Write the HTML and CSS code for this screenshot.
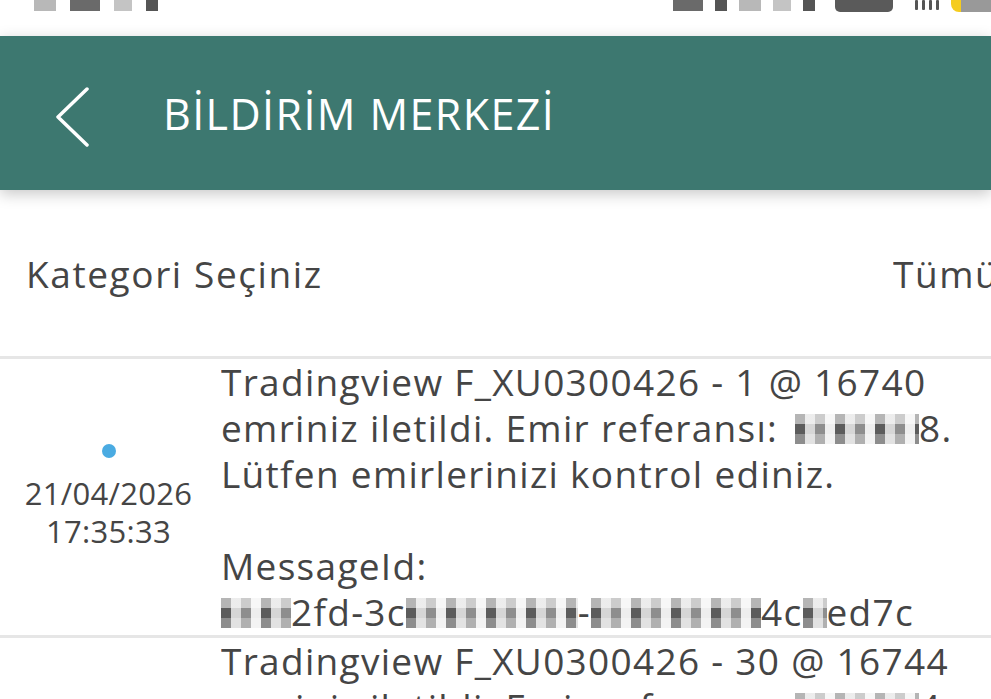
FILE: index.html
```html
<!DOCTYPE html>
<html>
<head>
<meta charset="utf-8">
<title>Bildirim Merkezi</title>
<link rel="stylesheet" href="styles.css">
</head>
<body>

<div class="status-bar">
    <div class="status-left">
        <span class="px px-a"></span>
        <span class="px px-b"></span>
        <span class="px px-c"></span>
        <span class="px px-d"></span>
    </div>
    <div class="status-right">
        <span class="px px-b"></span>
        <span class="px px-d"></span>
        <span class="px px-a"></span>
        <span class="px px-c"></span>
        <span class="px px-d"></span>
        <span class="battery"></span>
        <span class="signal"><i></i><i></i><i></i><i></i></span>
        <span class="charge"></span>
    </div>
</div>

<div class="app-header">
    <svg class="back" width="40" height="64" viewBox="0 0 40 64">
        <polyline points="33,6 4,34 33,62" fill="none" stroke="#fff" stroke-width="3.5" stroke-linecap="round" stroke-linejoin="round"/>
    </svg>
    <h1>BİLDİRİM MERKEZİ</h1>
</div>

<div class="filter-bar">
    <span class="filter-label">Kategori Seçiniz</span>
    <span class="filter-value">Tümü</span>
</div>

<div class="notice">
    <div class="notice-meta">
        <span class="unread-dot"></span>
        <span class="notice-date">21/04/2026</span>
        <span class="notice-time">17:35:33</span>
    </div>
    <div class="notice-text">
        Tradingview F_XU0300426 - 1 @ 16740<br>
        emriniz iletildi. Emir referansı: <span class="masked mask-ref"></span>8.<br>
        Lütfen emirlerinizi kontrol ediniz.<br>
        <br>
        MessageId:<br>
        <span class="masked mask-s"></span>2fd-3c<span class="masked mask-l"></span>-<span class="masked mask-m"></span>4c<span class="masked mask-xs"></span>ed7c
    </div>
</div>

<div class="notice">
    <div class="notice-meta">
        <span class="unread-dot"></span>
        <span class="notice-date">21/04/2026</span>
        <span class="notice-time">17:35:21</span>
    </div>
    <div class="notice-text">
        Tradingview F_XU0300426 - 30 @ 16744<br>
        emriniz iletildi. Emir referansı: <span class="masked mask-ref"></span>4.<br>
        Lütfen emirlerinizi kontrol ediniz.
    </div>
</div>

</body>
</html>
```

FILE: styles.css
```css
html, body {
    margin: 0;
    padding: 0;
}

body {
    width: 991px;
    height: 699px;
    overflow: hidden;
    background-color: #fff;
    font-family: "Open Sans", "Noto Sans", sans-serif;
    color: #454545;
}

/* status bar, pixelated like the capture */

.status-bar {
    height: 36px;
    display: flex;
    justify-content: space-between;
    align-items: flex-start;
}

.status-left {
    display: flex;
    gap: 14px;
    padding-left: 34px;
}

.status-right {
    display: flex;
    gap: 12px;
    align-items: flex-start;
}

.px {
    display: block;
    height: 11px;
    background-color: #9a9a9a;
}

.px-a { width: 22px; background-color: #b8b8b8; }
.px-b { width: 30px; background-color: #6a6a6a; }
.px-c { width: 18px; background-color: #c4c4c4; }
.px-d { width: 12px; background-color: #555; }

.battery {
    display: block;
    width: 58px;
    height: 12px;
    border-radius: 0 0 5px 5px;
    background-color: #5a5a5a;
    margin-left: 8px;
}

.signal {
    display: flex;
    gap: 4px;
    margin-left: 10px;
}

.signal i {
    display: block;
    width: 3px;
    height: 10px;
    border-radius: 1px;
    background-color: #555;
}

.charge {
    display: block;
    width: 40px;
    height: 12px;
    border-radius: 0 0 0 8px;
    background: linear-gradient(to right, #f5cc1e 0 10px, #999 10px);
}

/* header */

.app-header {
    height: 154px;
    background-color: #3d7870;
    display: flex;
    align-items: center;
    box-shadow: 0 4px 14px rgba(0, 0, 0, 0.22);
    position: relative;
}

.app-header .back {
    margin-left: 54px;
    margin-top: 4px;
}

.app-header h1 {
    margin: 0 0 0 69px;
    color: #fff;
    font-weight: normal;
    font-size: 43px;
    letter-spacing: 1.4px;
}

/* category filter */

.filter-bar {
    height: 166px;
    display: flex;
    align-items: center;
    border-bottom: 3px solid #e6e6e6;
    font-size: 37px;
    letter-spacing: 1.6px;
    white-space: nowrap;
}

.filter-label {
    padding-left: 26px;
}

.filter-value {
    margin-left: auto;
    width: 98px;
    overflow: hidden;
}

/* notice rows */

.notice {
    display: flex;
    border-bottom: 3px solid #e6e6e6;
}

.notice-meta {
    width: 221px;
    flex: none;
    display: flex;
    flex-direction: column;
    align-items: center;
    justify-content: center;
    padding-right: 4px;
    box-sizing: border-box;
    font-size: 31px;
    line-height: 38px;
    letter-spacing: 0.3px;
}

.unread-dot {
    width: 14px;
    height: 14px;
    border-radius: 50%;
    background-color: #4aabe2;
    margin-bottom: 16px;
}

.notice-text {
    font-size: 37px;
    line-height: 46px;
    letter-spacing: 1.3px;
    white-space: nowrap;
    height: 276px;
    overflow: hidden;
}

/* blurred parts of the capture */

.masked {
    display: inline-block;
    height: 30px;
    vertical-align: -2px;
    background-color: #bdbdbd;
    background-image:
        linear-gradient(rgba(255, 255, 255, 0.55) 0 10px, transparent 10px 20px, rgba(255, 255, 255, 0.3) 20px),
        repeating-linear-gradient(90deg, #5c5c5c 0 10px, #d6d6d6 10px 20px, #8e8e8e 20px 30px, #eeeeee 30px 40px);
}

.mask-ref { width: 124px; margin-left: 6px; }
.mask-xs { width: 24px; }
.mask-s { width: 70px; }
.mask-m { width: 170px; }
.mask-l { width: 172px; }
```
